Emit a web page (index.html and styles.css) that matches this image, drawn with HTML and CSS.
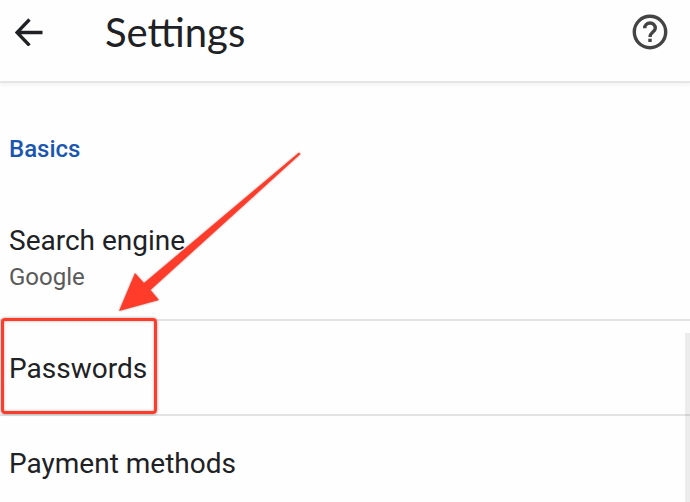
FILE: index.html
```
<!DOCTYPE html>
<html lang="en">
<head>
    <meta charset="UTF-8">
    <meta name="viewport" content="width=device-width, initial-scale=1.0">
    <title>Settings</title>
    <link rel="stylesheet" href="styles.css">
</head>
<body>
    <header class="app-bar">
        <button class="icon-button" type="button" aria-label="Back">
            <svg width="28" height="28" viewBox="0 0 28 28" fill="none" stroke="#202124" stroke-width="3.300">
                <path d="M27.500 14.500H2.500M14.500 1.500L2 14.500L14.500 27.500"/>
            </svg>
        </button>
        <h1 class="title">Settings</h1>
        <button class="icon-button" type="button" aria-label="Help">
            <svg width="36" height="36" viewBox="0 0 36 36" fill="none" stroke="#444" stroke-width="3.400">
                <circle cx="18" cy="18" r="15.700"/>
                <path d="M12.700 14.300A5.300 5.300 0 0 1 23.300 14.300C23.300 18 18 18.300 18 23"/>
                <path d="M18 24.700V28"/>
            </svg>
        </button>
    </header>

    <main class="settings">
        <h2 class="section-title">Basics</h2>
        <a href="#search-engine" class="row row-double">
            <span class="row-label">Search engine</span>
            <span class="row-value">Google</span>
        </a>
        <a href="#passwords" class="row">
            <span class="row-label highlight">Passwords</span>
        </a>
        <a href="#payment" class="row">
            <span class="row-label">Payment methods</span>
        </a>

        <!-- Pointer to the Passwords row -->
        <svg class="pointer" width="184" height="162" viewBox="0 0 184 162" aria-hidden="true">
            <path fill="#ff3b2a" d="M1 159L17 121L26 131L181 0.500L182.500 2L32.500 138L41 148Z"/>
        </svg>
        <div class="scroll-thumb"></div>
    </main>
</body>
</html>
```

FILE: styles.css
```
*,
*::before {
    margin: 0;
    padding: 0;
    box-sizing: border-box;
}

body {
    height: 100vh;
    display: flex;
    flex-direction: column;
    overflow: hidden;
    background: #fefefe;
    color: #202124;
    font-family: Roboto, sans-serif;
}

/* App bar */
.app-bar {
    display: flex;
    align-items: center;
    flex-shrink: 0;
    padding: 8px 22px 25px 15px;
    border-bottom: 2px solid #e6e6e6;
    box-shadow: 0 2px 4px rgba(0, 0, 0, 0.05);
}

.icon-button {
    display: flex;
    border: none;
    background: none;
    cursor: pointer;
}

.title {
    flex: 1;
    margin-left: 62px;
    font-family: Lato, sans-serif;
    font-size: 40px;
    font-weight: 400;
    line-height: 48px;
}

/* Settings list */
.settings {
    position: relative;
    flex: 1;
    overflow: hidden;
}

.section-title {
    padding: 50px 9px 0;
    color: #1a56b0;
    font-size: 24px;
    font-weight: 500;
    line-height: 32px;
}

.row {
    position: relative;
    display: flex;
    flex-direction: column;
    justify-content: center;
    min-height: 95px;
    padding: 2px 9px 0;
    border-bottom: 2px solid #e3e3e3;
    color: inherit;
    text-decoration: none;
}

.row-double {
    padding: 56px 9px 26px;
}

.row-label {
    font-size: 28px;
    line-height: 40px;
}

.row-value {
    color: #5a5a5a;
    font-size: 24px;
    line-height: 32px;
}

.highlight::before {
    content: '';
    position: absolute;
    top: -3px;
    bottom: 0;
    left: 1px;
    width: 156px;
    border: 3px solid #ff3b2a;
    border-radius: 4px;
    box-shadow: 0 0 3px rgba(0, 0, 0, 0.4), inset 0 0 3px rgba(0, 0, 0, 0.3);
}

.pointer {
    position: absolute;
    top: 69px;
    left: 118px;
    overflow: visible;
    filter: drop-shadow(0 0 1px rgba(0, 0, 0, 0.4));
}

.scroll-thumb {
    position: absolute;
    top: 250px;
    right: 0;
    bottom: 0;
    width: 5px;
    background: rgba(0, 0, 0, 0.07);
}
```
